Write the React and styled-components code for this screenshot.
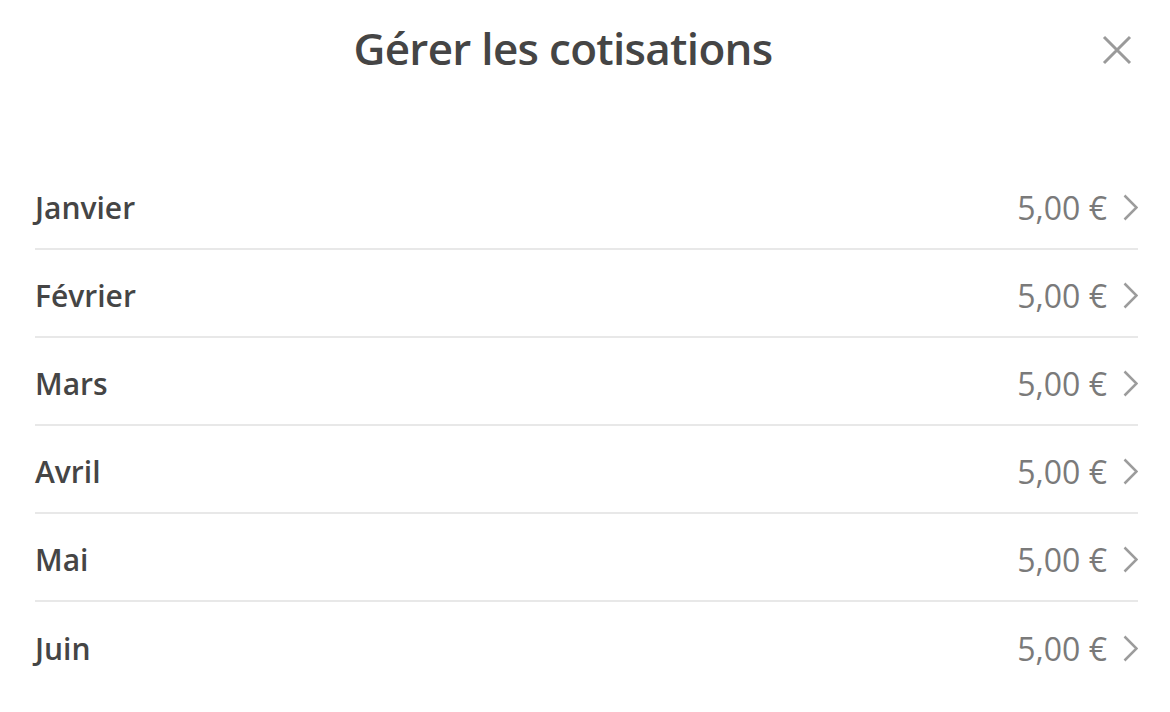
import React from "react";
import styled, { createGlobalStyle } from "styled-components";

const GlobalStyle = createGlobalStyle`
  body {
    margin: 0;
    background: #ffffff;
    font-family: 'Open Sans', 'Noto Sans', sans-serif;
  }
`;

const months = ["Janvier", "Février", "Mars", "Avril", "Mai", "Juin"];

const Modal = styled.div`
  width: 1170px;
  height: 712px;
  background: #fff;
  overflow: hidden;
`;

const Header = styled.header`
  position: relative;
  height: 96px;
  padding-right: 44px;
  display: flex;
  align-items: center;
  justify-content: center;
`;

const Title = styled.h1`
  margin: 0;
  font-size: 44px;
  font-weight: 600;
  color: #454545;
  letter-spacing: -0.7px;
`;

const CloseButton = styled.button`
  position: absolute;
  top: 34px;
  right: 37px;
  width: 32px;
  height: 32px;
  padding: 0;
  border: none;
  background: none;
  cursor: pointer;
  display: flex;
  align-items: center;
  justify-content: center;
`;

const List = styled.ul`
  list-style: none;
  margin: 66px 32px 0 35px;
  padding: 0;
`;

const Row = styled.li`
  height: 88px;
  display: flex;
  align-items: center;
  justify-content: space-between;
  padding-top: 5px;
  box-sizing: border-box;
  border-bottom: ${({ last }) => (last ? "none" : "2px solid #e8e8e8")};
`;

const Month = styled.span`
  font-size: 30px;
  font-weight: 600;
  color: #454545;
`;

const Amount = styled.span`
  display: flex;
  align-items: center;
  gap: 16px;
  font-size: 32px;
  font-weight: 400;
  color: #7a7a7a;
`;

const Chevron = () => (
  <svg width="15" height="27" viewBox="0 0 15 27" fill="none">
    <path d="M1.5 1.5 L13.5 13.5 L1.5 25.5" stroke="#9c9c9c" strokeWidth="2.5" />
  </svg>
);

const CloseIcon = () => (
  <svg width="30" height="30" viewBox="0 0 30 30" fill="none">
    <path d="M2 2 L28 28 M28 2 L2 28" stroke="#9a9a9a" strokeWidth="3" />
  </svg>
);

const App = () => (
  <Modal>
    <GlobalStyle />
    <Header>
      <Title>Gérer les cotisations</Title>
      <CloseButton aria-label="Fermer">
        <CloseIcon />
      </CloseButton>
    </Header>
    <List>
      {months.map((m, i) => (
        <Row key={m} last={i === months.length - 1}>
          <Month>{m}</Month>
          <Amount>
            5,00 €
            <Chevron />
          </Amount>
        </Row>
      ))}
    </List>
  </Modal>
);

export default App;
